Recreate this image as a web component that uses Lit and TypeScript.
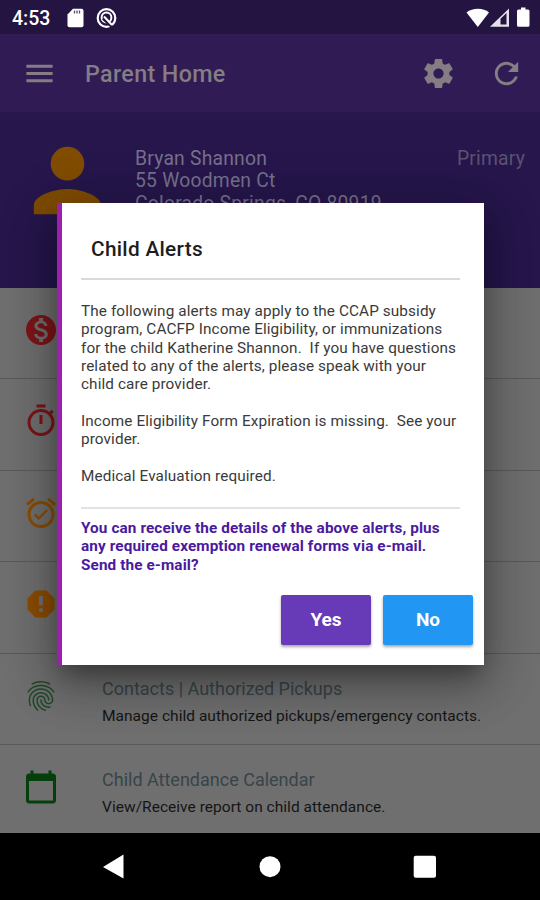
import { LitElement, html, css, svg, nothing } from "lit";
import { customElement, property } from "lit/decorators.js";

const ICONS: Record<string, string> = {
  menu: "M3 18h18v-2H3v2zm0-5h18v-2H3v2zm0-7v2h18V6H3z",
  settings:
    "M19.43 12.98c.04-.32.07-.64.07-.98s-.03-.66-.07-.98l2.11-1.65c.19-.15.24-.42.12-.64l-2-3.46c-.12-.22-.39-.3-.61-.22l-2.49 1c-.52-.4-1.08-.73-1.69-.98l-.38-2.65C14.46 2.18 14.25 2 14 2h-4c-.25 0-.46.18-.49.42l-.38 2.65c-.61.25-1.17.59-1.69.98l-2.49-1c-.23-.09-.49 0-.61.22l-2 3.46c-.13.22-.07.49.12.64l2.11 1.65c-.04.32-.07.65-.07.98s.03.66.07.98l-2.11 1.65c-.19.15-.24.42-.12.64l2 3.46c.12.22.39.3.61.22l2.49-1c.52.4 1.08.73 1.69.98l.38 2.65c.03.24.24.42.49.42h4c.25 0 .46-.18.49-.42l.38-2.65c.61-.25 1.17-.59 1.69-.98l2.49 1c.23.09.49 0 .61-.22l2-3.46c.12-.22.07-.49-.12-.64l-2.11-1.65zM12 15.5c-1.93 0-3.5-1.57-3.5-3.5s1.57-3.5 3.5-3.5 3.5 1.57 3.5 3.5-1.57 3.5-3.5 3.5z",
  refresh:
    "M17.65 6.35C16.2 4.9 14.21 4 12 4c-4.42 0-7.99 3.58-7.99 8s3.57 8 7.99 8c3.73 0 6.84-2.55 7.73-6h-2.08c-.82 2.33-3.04 4-5.65 4-3.31 0-6-2.69-6-6s2.69-6 6-6c1.66 0 3.14.69 4.22 1.78L13 11h7V4l-2.35 2.35z",
  person:
    "M12 12c2.21 0 4-1.79 4-4s-1.79-4-4-4-4 1.79-4 4 1.79 4 4 4zm0 2c-2.67 0-8 1.34-8 4v2h16v-2c0-2.66-5.33-4-8-4z",
  money:
    "M12 2C6.48 2 2 6.48 2 12s4.48 10 10 10 10-4.48 10-10S17.52 2 12 2zm1.41 16.09V20h-2.67v-1.93c-1.71-.36-3.16-1.46-3.27-3.4h1.96c.1 1.05.82 1.87 2.65 1.87 1.96 0 2.4-.98 2.4-1.59 0-.83-.44-1.61-2.67-2.14-2.48-.6-4.18-1.62-4.18-3.67 0-1.72 1.39-2.84 3.11-3.21V4h2.67v1.95c1.86.45 2.79 1.86 2.85 3.39H14.3c-.05-1.11-.64-1.87-2.22-1.87-1.5 0-2.4.68-2.4 1.64 0 .84.65 1.39 2.67 1.91s4.18 1.39 4.18 3.91c-.01 1.83-1.38 2.83-3.12 3.16z",
  timer:
    "M15 1H9v2h6V1zm-4 13h2V8h-2v6zm8.03-6.61l1.42-1.42c-.43-.51-.9-.99-1.41-1.41l-1.42 1.42C16.07 4.74 14.12 4 12 4c-4.97 0-9 4.03-9 9s4.02 9 9 9 9-4.03 9-9c0-2.12-.74-4.07-1.97-5.61zM12 20c-3.87 0-7-3.13-7-7s3.13-7 7-7 7 3.13 7 7-3.13 7-7 7z",
  alarm:
    "M22 5.72l-4.6-3.86-1.29 1.53 4.6 3.86L22 5.72zM7.88 3.39L6.6 1.86 2 5.71l1.29 1.53 4.59-3.85zM12 4c-4.97 0-9 4.03-9 9s4.02 9 9 9c4.97 0 9-4.03 9-9s-4.03-9-9-9zm0 16c-3.87 0-7-3.13-7-7s3.13-7 7-7 7 3.13 7 7-3.13 7-7 7zm-1.46-5.47L8.41 12.4l-1.06 1.06 3.18 3.18 6-6-1.06-1.06-4.93 4.95z",
  octagon:
    "M13.3 13H10.7V6.6H13.3M12 17.5A1.4 1.4 0 0 1 10.6 16.1A1.4 1.4 0 0 1 12 14.7A1.4 1.4 0 0 1 13.4 16.1A1.4 1.4 0 0 1 12 17.5M15.73 3H8.27L3 8.27V15.73L8.27 21H15.73L21 15.73V8.27L15.73 3Z",
  fingerprint:
    "M17.81 4.47c-.08 0-.16-.02-.23-.06C15.66 3.42 14 3 12.01 3c-1.98 0-3.86.47-5.57 1.41-.24.13-.54.04-.68-.2-.13-.24-.04-.55.2-.68C7.82 2.52 9.86 2 12.01 2c2.13 0 3.99.47 6.03 1.52.25.13.34.43.21.67-.09.18-.26.28-.44.28zM3.5 9.72c-.1 0-.2-.03-.29-.09-.23-.16-.28-.47-.12-.7.99-1.4 2.25-2.5 3.75-3.27C9.98 4.04 14 4.03 17.15 5.65c1.5.77 2.76 1.86 3.75 3.25.16.22.11.54-.12.7-.23.16-.54.11-.7-.12-.9-1.26-2.04-2.25-3.39-2.94-2.87-1.47-6.54-1.47-9.4.01-1.36.7-2.5 1.7-3.4 2.96-.08.14-.23.21-.39.21zm6.25 12.07c-.13 0-.26-.05-.35-.15-.87-.87-1.34-1.43-2.01-2.64-.69-1.23-1.05-2.73-1.05-4.34 0-2.97 2.54-5.39 5.66-5.39s5.66 2.42 5.66 5.39c0 .28-.22.5-.5.5s-.5-.22-.5-.5c0-2.42-2.09-4.39-4.66-4.39-2.57 0-4.66 1.97-4.66 4.39 0 1.44.32 2.77.93 3.85.64 1.15 1.08 1.64 1.85 2.42.19.2.19.51 0 .71-.11.1-.24.15-.37.15zm7.17-1.85c-1.19 0-2.24-.3-3.1-.89-1.49-1.01-2.38-2.65-2.38-4.39 0-.28.22-.5.5-.5s.5.22.5.5c0 1.41.72 2.74 1.94 3.56.71.48 1.54.71 2.54.71.24 0 .64-.03 1.04-.1.27-.05.53.13.58.41.05.27-.13.53-.41.58-.57.11-1.07.12-1.21.12zM14.91 22c-.04 0-.09-.01-.13-.02-1.59-.44-2.63-1.03-3.72-2.1-1.4-1.39-2.17-3.24-2.17-5.22 0-1.62 1.38-2.94 3.08-2.94 1.7 0 3.08 1.32 3.08 2.94 0 1.07.93 1.94 2.08 1.94s2.08-.87 2.08-1.94c0-3.77-3.25-6.83-7.25-6.83-2.84 0-5.44 1.58-6.61 4.03-.39.81-.59 1.76-.59 2.8 0 .78.07 2.01.67 3.61.1.26-.03.55-.29.64-.26.1-.55-.04-.64-.29-.49-1.31-.73-2.61-.73-3.96 0-1.2.23-2.29.68-3.24 1.33-2.79 4.28-4.6 7.51-4.6 4.55 0 8.25 3.51 8.25 7.83 0 1.62-1.38 2.94-3.08 2.94s-3.08-1.32-3.08-2.94c0-1.07-.93-1.94-2.08-1.94s-2.08.87-2.08 1.94c0 1.71.66 3.31 1.87 4.51.95.94 1.86 1.46 3.27 1.85.27.07.42.35.35.61-.05.23-.26.38-.47.38z",
  calendar:
    "M20 3h-1V1h-2v2H7V1H5v2H4c-1.1 0-2 .9-2 2v16c0 1.1.9 2 2 2h16c1.1 0 2-.9 2-2V5c0-1.1-.9-2-2-2zm0 18H4V8h16v13z",
};

@customElement("ui-icon")
class UiIcon extends LitElement {
  @property() name = "menu";
  static styles = css`
    :host {
      display: block;
      width: 35px;
      height: 35px;
      flex: none;
    }
    svg {
      display: block;
      width: 100%;
      height: 100%;
      fill: currentColor;
    }
  `;
  render() {
    return html`<svg viewBox="0 0 24 24">${svg`<path fill-rule="evenodd" d=${ICONS[this.name]}></path>`}</svg>`;
  }
}

interface Item {
  icon: string;
  tone: string;
  title?: string;
  detail?: string;
}

const ITEMS: Item[] = [
  { icon: "money", tone: "red" },
  { icon: "timer", tone: "red" },
  { icon: "alarm", tone: "orange" },
  { icon: "octagon", tone: "orange" },
  {
    icon: "fingerprint",
    tone: "green",
    title: "Contacts | Authorized Pickups",
    detail: "Manage child authorized pickups/emergency contacts.",
  },
  {
    icon: "calendar",
    tone: "green dark",
    title: "Child Attendance Calendar",
    detail: "View/Receive report on child attendance.",
  },
];

@customElement("app-root")
class AppRoot extends LitElement {
  static styles = css`
    :host {
      display: flex;
      flex-direction: column;
      position: relative;
      width: 540px;
      height: 900px;
      overflow: hidden;
      background: #6f6f6f;
      font-family: Roboto, "Liberation Sans", sans-serif;
    }
    * {
      box-sizing: border-box;
    }
    .status {
      height: 34px;
      flex: none;
      display: flex;
      align-items: center;
      padding: 2px 8px 0 12px;
      background: #241441;
      color: #fff;
    }
    .clock {
      font-size: 19.5px;
      font-weight: 500;
      width: 55px;
    }
    .status svg {
      display: block;
      flex: none;
    }
    .left {
      display: flex;
      gap: 12px;
      flex: 1;
    }
    .bar {
      height: 79px;
      flex: none;
      display: flex;
      align-items: center;
      background: #301b54;
      border-bottom: 1px solid #27174b;
      color: #857d84;
      padding: 1px 16px 0 22px;
    }
    .bar h1 {
      flex: 1;
      margin: 0 0 0 28px;
      font-size: 23.3px;
      font-weight: 500;
      letter-spacing: 0.35px;
    }
    .actions {
      display: flex;
      gap: 33px;
    }
    .hero {
      height: 174.5px;
      flex: none;
      display: flex;
      background: #26164c;
      color: #77708a;
      padding: 17px 15px 0 17px;
    }
    .avatar {
      width: 101px;
      height: 101px;
      color: #7f4c00;
      margin-right: 17px;
    }
    .who {
      flex: 1;
      padding-top: 18px;
      font-size: 19.3px;
      line-height: 22.4px;
      white-space: nowrap;
      letter-spacing: 0.23px;
    }
    .tag {
      padding-top: 18px;
      font-size: 19.3px;
      line-height: 22.4px;
      color: #5c5272;
      letter-spacing: 0.2px;
    }
    .list {
      flex: 1;
      overflow: hidden;
    }
    .row {
      display: flex;
      height: 91.6px;
      border-bottom: 1px solid #5a5a5a;
      padding: 24px 0 0 23px;
    }
    .row ui-icon {
      width: 36px;
      height: 36px;
      margin-right: 43px;
    }
    .red {
      color: #7d1519;
    }
    .orange {
      color: #8c4c00;
    }
    .green {
      color: #1f4a28;
    }
    .dark {
      color: #063f0c;
    }
    .text {
      white-space: nowrap;
    }
    .title {
      font-size: 18px;
      line-height: 22px;
      color: #37444a;
    }
    .detail {
      margin-top: 7px;
      font-size: 15.5px;
      line-height: 18px;
      color: #151515;
      letter-spacing: 0.03px;
    }
    .nav {
      height: 67px;
      flex: none;
      background: #000;
      display: flex;
      justify-content: center;
    }
    .nav svg {
      display: block;
    }
    .dialog {
      position: absolute;
      left: 57px;
      top: 203px;
      width: 427px;
      height: 462px;
      background: #fff;
      border-left: 5px solid #9c1fb0;
      padding: 33px 11px 0 19px;
      display: flex;
      flex-direction: column;
      box-shadow:
        0 14px 20px -6px rgba(0, 0, 0, 0.3),
        0 20px 44px 4px rgba(0, 0, 0, 0.2),
        0 8px 50px 8px rgba(0, 0, 0, 0.16);
    }
    .dialog h2 {
      margin: 0;
      padding-left: 10px;
      font-size: 20.8px;
      line-height: 26px;
      font-weight: 500;
      color: #1d1d1d;
      letter-spacing: 0.3px;
    }
    .rule {
      height: 2px;
      flex: none;
      background: #dadada;
      margin: 16px 13px 0 0;
    }
    .body {
      margin: 22px 0 0;
      font-size: 15.3px;
      line-height: 18.3px;
      color: #3a3a3a;
      white-space: pre;
      letter-spacing: 0.11px;
    }
    .ask {
      margin: 10px 0 0;
      font-size: 15.3px;
      line-height: 18.4px;
      font-weight: 700;
      color: #4a1a9e;
      white-space: pre;
      letter-spacing: 0.11px;
    }
    .rule.low {
      margin-top: 22px;
      background: #e2e2e2;
    }
    .buttons {
      display: flex;
      justify-content: flex-end;
      gap: 12px;
      margin-top: 20.5px;
    }
    button {
      font: 700 19px Roboto, "Liberation Sans", sans-serif;
      width: 90px;
      height: 50px;
      border: 0;
      border-radius: 2px;
      color: #fff;
      padding: 0;
      background: #2196f3;
      box-shadow: 0 2px 3px rgba(0, 0, 0, 0.35);
    }
    .yes {
      background: #673ab7;
    }
  `;

  render() {
    return html`
      <div class="status">
        <div class="clock">4:53</div>
        <div class="left">
          <svg width="17" height="20" viewBox="0 0 17 20">
            <path fill="#fff" d="M6 .7h8.500a2 2 0 0 1 2 2v14.600a2 2 0 0 1-2 2h-12a2 2 0 0 1-2-2V6.500z" />
            <path stroke="#5b5168" stroke-width="1.300" d="M7.500 2.500v3M10 2.500v3M12.500 2.500v3" />
          </svg>
          <svg width="21" height="20" viewBox="0 0 21 20">
            <circle cx="10.500" cy="10" r="8.800" fill="none" stroke="#fff" stroke-width="2.200" />
            <circle cx="10.500" cy="9.500" r="4.900" fill="none" stroke="#fff" stroke-width="2" />
            <path stroke="#241441" stroke-width="2.600" d="M7 10.500l10 9.500" />
            <path stroke="#fff" stroke-width="2" d="M8 8.500l8 8.500" />
          </svg>
        </div>
        <svg width="66" height="22" viewBox="0 0 66 22">
          <path fill="#fff" d="M.5 5.500C6.500.5 17.500.5 23 5.500L11.800 20z" />
          <path fill="#e4e1e8" fill-rule="evenodd" d="M24 19.800L43 1.500V19.800zM34.500 11.700v5.800h6v-11.600z" />
          <path fill="#fff" d="M55 .5h4.500v2H62a1.500 1.500 0 0 1 1.500 1.500v14.300a1.500 1.500 0 0 1-1.500 1.500h-9.500a1.500 1.500 0 0 1-1.500-1.500V4a1.500 1.500 0 0 1 1.500-1.500H55z" />
        </svg>
      </div>
      <div class="bar">
        <ui-icon name="menu"></ui-icon>
        <h1>Parent Home</h1>
        <div class="actions">
          <ui-icon name="settings"></ui-icon>
          <ui-icon name="refresh"></ui-icon>
        </div>
      </div>
      <div class="hero">
        <ui-icon class="avatar" name="person"></ui-icon>
        <div class="who">
          <div>Bryan Shannon</div>
          <div>55 Woodmen Ct</div>
          <div>Colorado Springs, CO 80919</div>
        </div>
        <div class="tag">Primary</div>
      </div>
      <div class="list">
        ${ITEMS.map(
          (i) => html`<div class="row">
            <ui-icon class=${i.tone} name=${i.icon}></ui-icon>
            ${i.title
              ? html`<div class="text">
                  <div class="title">${i.title}</div>
                  <div class="detail">${i.detail}</div>
                </div>`
              : nothing}
          </div>`
        )}
      </div>
      <div class="nav">
        <svg width="540" height="67" viewBox="0 0 540 67" fill="#fff">
          <path d="M123.500 21.500v24L103 34z" />
          <circle cx="270" cy="33.700" r="10.500" />
          <rect x="413.700" y="22.700" width="22.300" height="22" rx="2" />
        </svg>
      </div>
      <div class="dialog">
        <h2>Child Alerts</h2>
        <div class="rule"></div>
        <p class="body">${[
          "The following alerts may apply to the CCAP subsidy",
          "program, CACFP Income Eligibility, or immunizations",
          "for the child Katherine Shannon.  If you have questions",
          "related to any of the alerts, please speak with your",
          "child care provider.",
          "",
          "Income Eligibility Form Expiration is missing.  See your",
          "provider.",
          "",
          "Medical Evaluation required.",
        ].join("\n")}</p>
        <div class="rule low"></div>
        <p class="ask">${[
          "You can receive the details of the above alerts, plus",
          "any required exemption renewal forms via e-mail.",
          "Send the e-mail?",
        ].join("\n")}</p>
        <div class="buttons">
          <button class="yes">Yes</button>
          <button>No</button>
        </div>
      </div>
    `;
  }
}
